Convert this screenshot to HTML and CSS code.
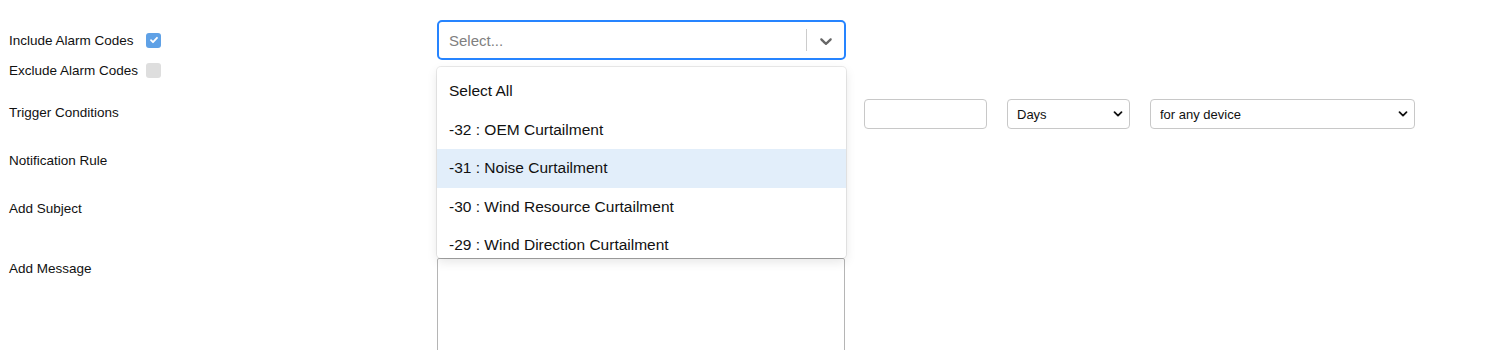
FILE: index.html
```html
<!DOCTYPE html>
<html lang="en">
<head>
  <meta charset="UTF-8">
  <title>Alarm Notification</title>
  <link rel="stylesheet" href="styles.css">
</head>
<body>

<div class="rule-form">
  <div class="row row-codes">
    <div class="label-col">
      <span class="field-label">Include Alarm Codes</span>
      <span class="check checked">
        <svg width="10" height="10" viewBox="0 0 10 10"><path d="M2 5.2l2 2 4-4.4" fill="none" stroke="#fff" stroke-width="1.8" stroke-linecap="round" stroke-linejoin="round"/></svg>
      </span>
    </div>
    <div class="picker">
      <div class="picker-control">
        <span class="picker-placeholder">Select...</span>
        <span class="picker-sep"></span>
        <span class="picker-arrow">
          <svg width="20" height="20" viewBox="0 0 20 20"><path fill="#666" d="M4.516 7.548c0.436-0.446 1.043-0.481 1.576 0l3.908 3.747 3.908-3.747c0.533-0.481 1.141-0.446 1.574 0 0.436 0.445 0.408 1.197 0 1.615-0.406 0.418-4.695 4.502-4.695 4.502-0.217 0.223-0.502 0.335-0.787 0.335s-0.57-0.112-0.789-0.335c0 0-4.287-4.084-4.695-4.502s-0.436-1.170 0-1.615z"/></svg>
        </span>
      </div>
      <div class="picker-menu">
        <div class="picker-option">Select All</div>
        <div class="picker-option">-32 : OEM Curtailment</div>
        <div class="picker-option focused">-31 : Noise Curtailment</div>
        <div class="picker-option">-30 : Wind Resource Curtailment</div>
        <div class="picker-option">-29 : Wind Direction Curtailment</div>
      </div>
    </div>
  </div>

  <div class="row row-exclude">
    <div class="label-col">
      <span class="field-label">Exclude Alarm Codes</span>
      <span class="check"></span>
    </div>
  </div>

  <div class="row row-trigger">
    <div class="label-col"><span class="field-label">Trigger Conditions</span></div>
    <div class="trigger-fields">
      <div class="spacer"></div>
      <input class="num-input" type="text">
      <select class="plain-select days-select">
        <option>Days</option>
      </select>
      <select class="plain-select device-select">
        <option>for any device</option>
      </select>
    </div>
  </div>

  <div class="row row-rule">
    <div class="label-col"><span class="field-label">Notification Rule</span></div>
  </div>

  <div class="row row-subject">
    <div class="label-col"><span class="field-label">Add Subject</span></div>
  </div>

  <div class="row row-message">
    <div class="label-col"><span class="field-label">Add Message</span></div>
    <textarea class="message-box"></textarea>
  </div>
</div>

<div class="form-footer"></div>

</body>
</html>
```

FILE: styles.css
```css
body {
  font-family: "Liberation Sans", Arial, sans-serif;
  background: #fff;
  color: #111;
  margin: 0;
  padding: 0 9px;
  overflow: hidden;
}

.rule-form {
  padding-top: 20px;
}

.row {
  display: flex;
  align-items: center;
}

.label-col {
  width: 428px;
  flex-shrink: 0;
  display: flex;
  align-items: center;
}

.field-label {
  font-size: 13.5px;
  width: 137px;
}

/* checkboxes */
.check {
  width: 15px;
  height: 15px;
  border-radius: 3px;
  background: #dedede;
  display: flex;
  align-items: center;
  justify-content: center;
}
.check.checked {
  background: #5fa1e6;
}

/* react-select style picker */
.picker {
  position: relative;
  width: 409px;
}

.picker-control {
  height: 40px;
  box-sizing: border-box;
  border: 2px solid #2684ff;
  border-radius: 5px;
  display: flex;
  align-items: center;
  padding-left: 10px;
}

.picker-placeholder {
  flex: 1;
  font-size: 15px;
  color: #808080;
}

.picker-sep {
  width: 1px;
  height: 22px;
  background: #ccc;
}

.picker-arrow {
  width: 37px;
  display: flex;
  justify-content: center;
  padding-top: 2px;
}

.picker-menu {
  position: absolute;
  top: 47px;
  left: 0;
  right: 0;
  z-index: 5;
  background: #fff;
  border-radius: 4px;
  box-shadow: 0 0 0 1px rgba(0,0,0,0.08), 0 4px 11px rgba(0,0,0,0.1);
  padding-top: 5px;
  height: 186px;
  overflow: hidden;
}

.picker-option {
  font-size: 15.5px;
  height: 38.5px;
  line-height: 38.5px;
  padding: 0 12px;
}
.picker-option.focused {
  background: #e2eefa;
}

.row-exclude {
  height: 20px;
}

.row-trigger {
  margin-top: 19px;
  height: 30px;
}
.row-trigger .field-label {
  margin-bottom: 3px;
}

.trigger-fields {
  display: flex;
  align-items: center;
}

.spacer {
  width: 408px;
}

.num-input, .plain-select {
  height: 30px;
  box-sizing: border-box;
  border: 1px solid #c8c8c8;
  border-radius: 4px;
  background: #fff;
  font-family: "Liberation Sans", Arial, sans-serif;
  font-size: 13px;
  color: #111;
}

.num-input {
  width: 123px;
  margin-left: 19px;
}

.plain-select {
  appearance: none;
  padding: 0 20px 0 9px;
  background-image: url("data:image/svg+xml;utf8,<svg xmlns='http://www.w3.org/2000/svg' width='10' height='8' viewBox='0 0 10 8'><path d='M1.5 2.2l3.5 3.4 3.5-3.4' fill='none' stroke='%23111' stroke-width='1.8' stroke-linecap='round' stroke-linejoin='round'/></svg>");
  background-repeat: no-repeat;
  background-position: right 6px center;
}

.days-select {
  width: 123px;
  margin-left: 20px;
}

.device-select {
  width: 265px;
  margin-left: 20px;
}

.row-rule {
  margin-top: 16px;
  height: 30px;
}

.row-subject {
  margin-top: 18px;
  height: 30px;
}

.row-message {
  margin-top: 35px;
  align-items: flex-start;
}
.row-message .field-label {
  margin-top: 3px;
}

.message-box {
  width: 408px;
  height: 110px;
  box-sizing: border-box;
  border: 1px solid #b5b5b5;
  border-radius: 2px;
  resize: none;
  margin: 0;
}

.form-footer {
  height: 40px;
  margin: 0 0 0 20px;
  box-shadow: 0 -2px 14px rgba(0,0,0,0.04);
}
```
